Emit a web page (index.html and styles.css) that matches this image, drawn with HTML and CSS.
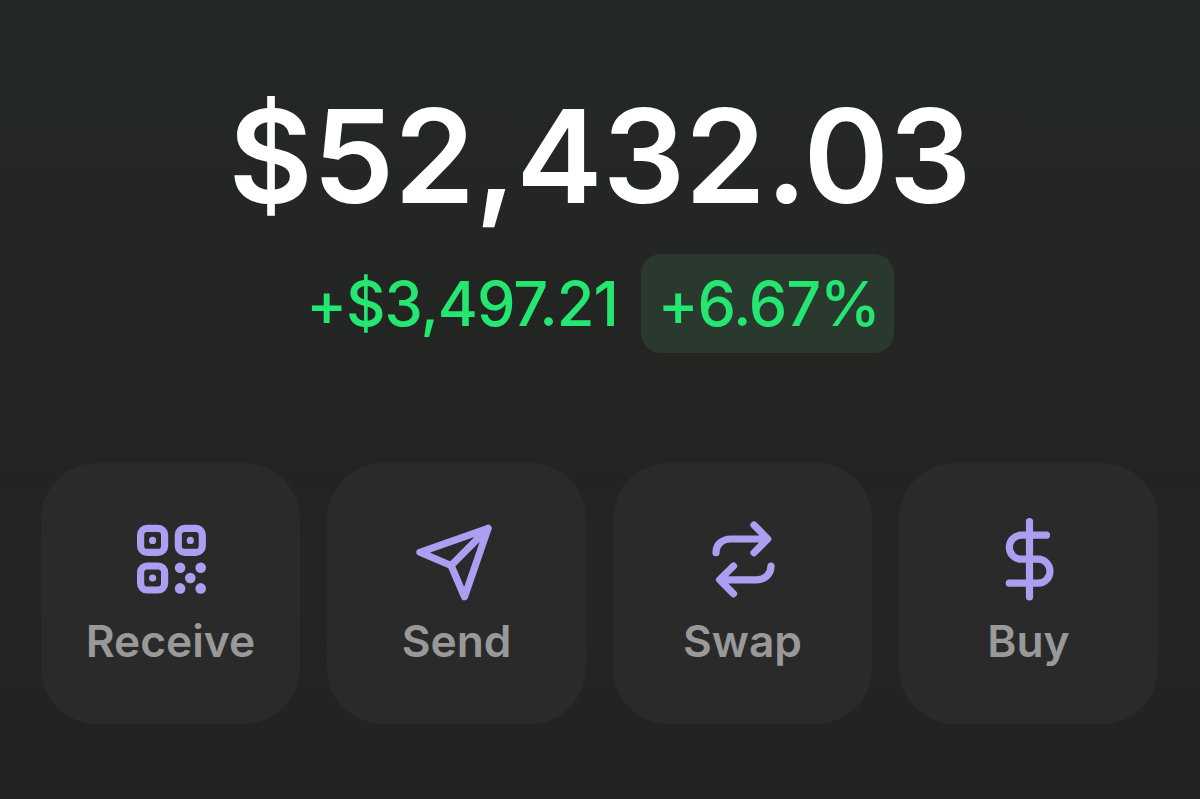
FILE: index.html
```
<!DOCTYPE html>
<html lang="en">
<head>
<meta charset="utf-8">
<title>Wallet</title>
<link rel="stylesheet" href="styles.css">
</head>
<body>
<main class="wallet">
  <h1 class="balance">$52,432.03</h1>
  <div class="change">
    <span class="change-amount">+$3,497.21</span>
    <span class="change-percent">+6.67%</span>
  </div>
  <nav class="actions">
    <button class="action">
      <svg class="icon" viewBox="0.8 0 100 100">
        <rect x="20.4" y="18.4" width="24" height="24" rx="6.5"/>
        <rect x="58.1" y="18.4" width="24" height="24" rx="6.5"/>
        <rect x="20.4" y="56" width="24" height="24" rx="6.5"/>
        <g class="dots">
          <circle cx="32.4" cy="30.4" r="3.6"/><circle cx="70.1" cy="30.4" r="3.6"/><circle cx="32.4" cy="68" r="3.6"/>
          <circle cx="59.9" cy="57.8" r="5.3"/><circle cx="80.5" cy="57.8" r="5.3"/><circle cx="70.1" cy="68" r="5.3"/>
          <circle cx="59.9" cy="78.4" r="5.3"/><circle cx="80.5" cy="78.4" r="5.3"/>
        </g>
      </svg>
      <span class="label">Receive</span>
    </button>
    <button class="action">
      <svg class="icon" viewBox="1.9 0 100 100"><path d="M83 18.3 14.8 42.3 46 55.5 59.4 86.8ZL46 55.5"/></svg>
      <span class="label">Send</span>
    </button>
    <button class="action">
      <svg class="icon" viewBox="-2 0 100 100"><path d="M21 42.7C21 34.5 27 29 36 29H72.5M59 15 72.7 29 59 42.7M76 56C76 64 70 69.8 62 69.8H25M38.5 56 24.6 69.8 38.5 83.8"/></svg>
      <span class="label">Swap</span>
    </button>
    <button class="action">
      <svg class="icon" viewBox="-1 0 100 100"><path d="M49.5 11.7V87M66.5 25.2H41.3A12 12 0 0 0 41.3 49.2H58A12 12 0 0 1 58 73.2H29.3"/></svg>
      <span class="label">Buy</span>
    </button>
  </nav>
</main>
</body>
</html>
```
FILE: styles.css
```
* { box-sizing: border-box; }

body {
  margin: 0;
  font-family: Inter, "Liberation Sans", sans-serif;
}

.wallet {
  height: 799px;
  overflow: hidden;
  padding: 77px 41px 0;
  background: linear-gradient(#252926 0%, #232624 32%, #242523 45%, #222423 60%, #242424 76%, #222222 100%);
}

.balance {
  margin: 0;
  height: 158px;
  line-height: 158px;
  text-align: center;
  font-size: 129.6px;
  font-weight: 600;
  color: #fff;
}

.change {
  display: flex;
  justify-content: center;
  align-items: center;
  gap: 23px;
  margin-top: 19px;
  height: 99px;
  font-size: 61.2px;
  font-weight: 500;
  line-height: 100px;
  letter-spacing: -1.1px;
  color: #24e771;
}

.change-percent {
  width: 253px;
  height: 99px;
  padding-left: 17px;
  border-radius: 20px;
  background: #29392e;
}

.actions {
  display: grid;
  grid-template-columns: repeat(4, 259px);
  gap: 27px;
  margin-top: 110px;
}

.action {
  display: flex;
  flex-direction: column;
  align-items: center;
  height: 260.5px;
  padding: 47px 0 0;
  border: 0;
  border-radius: 56px;
  background: #2a2a2a;
  font-family: inherit;
}

.icon {
  width: 100px;
  height: 100px;
  fill: none;
  stroke: #ab9ff2;
  stroke-width: 7.2;
  stroke-linecap: round;
  stroke-linejoin: round;
}

.dots {
  fill: #ab9ff2;
  stroke: none;
}

.label {
  margin-top: 4px;
  font-size: 44.3px;
  font-weight: 600;
  line-height: 54px;
  color: #999;
}
```
